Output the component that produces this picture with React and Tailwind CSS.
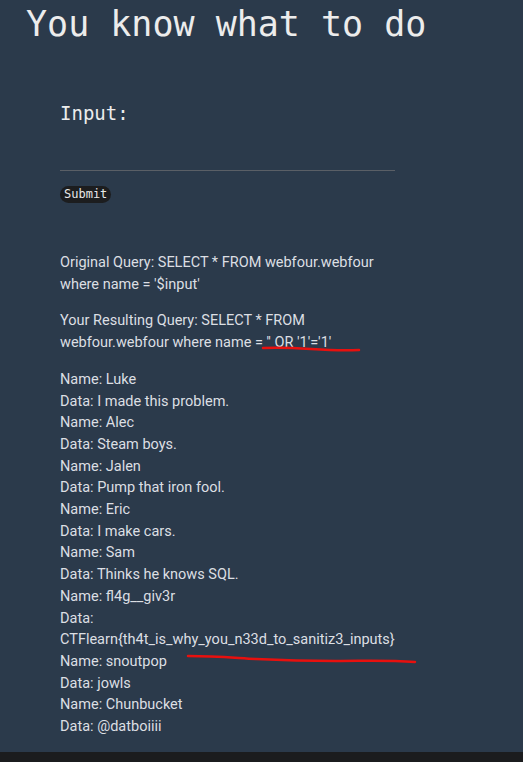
export default function App() {
  const rows = [
    ['Name', 'Luke'],
    ['Data', 'I made this problem.'],
    ['Name', 'Alec'],
    ['Data', 'Steam boys.'],
    ['Name', 'Jalen'],
    ['Data', 'Pump that iron fool.'],
    ['Name', 'Eric'],
    ['Data', 'I make cars.'],
    ['Name', 'Sam'],
    ['Data', 'Thinks he knows SQL.'],
    ['Name', 'fl4g__giv3r'],
  ]
  const tail = [
    ['Name', 'snoutpop'],
    ['Data', 'jowls'],
    ['Name', 'Chunbucket'],
    ['Data', '@datboiiii'],
  ]

  return (
    <div className="min-h-[762px] bg-[#1b1c1e]">
      <div className="bg-[#2b3a4b] pb-[14px]">
        <h1 className="pl-[26px] pt-[4px] text-[35px] leading-[41px] text-[#ececec] font-['DejaVu_Sans_Mono',monospace]">
          You know what to do
        </h1>

        <div className="pl-[60px] w-[395px] mt-[57px]">
          <form className="font-['DejaVu_Sans_Mono',monospace]" onSubmit={(e) => e.preventDefault()}>
            <label className="block text-[19px] leading-[22px] text-[#ececec]">Input:</label>
            <input
              type="text"
              className="block w-[335px] mt-[23px] h-[24px] border-b border-[#5a5f66] bg-transparent outline-none text-[#e6e6e6]"
            />
            <button className="mt-[15px] rounded-full bg-[#1c1d1f] px-[4px] text-[12px] leading-[17px] text-[#e8e8e8]">
              Submit
            </button>
          </form>

          <div className="mt-[47px] font-['Roboto',sans-serif] text-[14.5px] leading-[21.7px] text-[#dcdfe3]">
            <p>Original Query: SELECT * FROM webfour.webfour where name = '$input'</p>
            <p className="relative mt-[15px]">
              Your Resulting Query: SELECT * FROM webfour.webfour where name = '' OR '1'='1'
              <svg className="absolute left-[201px] top-[35px]" width="100" height="10" viewBox="0 0 100 10">
                <path d="M2 3 C20 2 35 3 50 4 S80 6 98 5" stroke="#e8100e" strokeWidth="2.5" fill="none" strokeLinecap="round" />
              </svg>
            </p>
            <div className="relative mt-[15px]">
              {rows.map(([k, v], i) => (
                <div key={i}>
                  {k}: {v}
                </div>
              ))}
              <div>Data:</div>
              <div>CTFlearn{'{'}th4t_is_why_you_n33d_to_sanitiz3_inputs{'}'}</div>
              {tail.map(([k, v], i) => (
                <div key={'t' + i}>
                  {k}: {v}
                </div>
              ))}
              <svg className="absolute left-[126px] top-[284px]" width="232" height="14" viewBox="0 0 232 14">
                <path
                  d="M2 3 C30 3 50 5 70 6 S120 8 150 8 S200 7 229 9"
                  stroke="#e8100e"
                  strokeWidth="2.5"
                  fill="none"
                  strokeLinecap="round"
                />
              </svg>
            </div>
          </div>
        </div>
      </div>
    </div>
  )
}
